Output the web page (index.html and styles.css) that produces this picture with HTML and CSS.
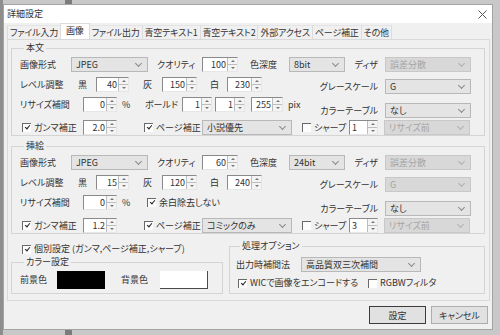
FILE: index.html
```html
<!DOCTYPE html>
<html lang="ja">
<head>
  <meta charset="UTF-8" />
  <title>詳細設定</title>
  <link rel="stylesheet" href="styles.css">
</head>
<body>
  <div class="dialog">
    <div class="titlebar">
      <span class="title">詳細設定</span>
      <svg class="close" width="9" height="9" viewBox="0 0 9 9"><path d="M0.5 0.5L8.5 8.5M8.5 0.5L0.5 8.5" stroke="#555" stroke-width="1"/></svg>
    </div>

    <div class="tabs">
      <span class="tab">ファイル入力</span>
      <span class="tab active">画像</span>
      <span class="tab">ファイル出力</span>
      <span class="tab">青空テキスト1</span>
      <span class="tab">青空テキスト2</span>
      <span class="tab">外部アクセス</span>
      <span class="tab">ページ補正</span>
      <span class="tab">その他</span>
    </div>

    <div class="panel">
      <!-- 本文 -->
      <fieldset class="group">
        <legend>本文</legend>
        <div class="layers">
          <div class="stack left">
            <div class="row">
              <span class="lb w51">画像形式</span>
              <span class="sel w77">JPEG</span>
              <span class="lb ml9 w45">クオリティ</span>
              <span class="spin w36"><span class="val">100</span><span class="updown"></span></span>
              <span class="lb ml12 w39">色深度</span>
              <span class="sel w56">8bit</span>
            </div>
            <div class="row">
              <span class="lb w58">レベル調整</span>
              <span class="lb w18">黒</span>
              <span class="spin w33"><span class="val">40</span><span class="updown"></span></span>
              <span class="lb ml14 w19">灰</span>
              <span class="spin w35"><span class="val">150</span><span class="updown"></span></span>
              <span class="lb ml13 w17">白</span>
              <span class="spin w35"><span class="val">230</span><span class="updown"></span></span>
            </div>
            <div class="row">
              <span class="lb w63">リサイズ補間</span>
              <span class="spin w34"><span class="val">0</span><span class="updown"></span></span>
              <span class="lb ml5 w23">%</span>
              <span class="lb w37">ボールド</span>
              <span class="spin w30"><span class="val">1</span><span class="updown"></span></span>
              <span class="spin ml3 w30"><span class="val">1</span><span class="updown"></span></span>
              <span class="spin ml6 w32"><span class="val">255</span><span class="updown"></span></span>
              <span class="lb ml5">pix</span>
            </div>
            <div class="row last">
              <span class="chk w63"><span class="box on"></span>ガンマ補正</span>
              <span class="spin w34"><span class="val">2.0</span><span class="updown"></span></span>
              <span class="chk ml25 w60"><span class="box on"></span>ページ補正</span>
              <span class="sel w90">小説優先</span>
              <span class="chk ml8 w49"><span class="box"></span>シャープ</span>
              <span class="spin start w29"><span class="val">1</span><span class="updown"></span></span>
              <span class="sel off ml6 w86">リサイズ前</span>
            </div>
          </div>
          <div class="stack right">
            <div class="row">
              <span class="lb">ディザ</span>
              <span class="sel off w86">誤差分散</span>
            </div>
            <div class="row">
              <span class="lb">グレースケール</span>
              <span class="sel w86">G</span>
            </div>
            <div class="row shifted">
              <span class="lb">カラーテーブル</span>
              <span class="sel w86">なし</span>
            </div>
          </div>
        </div>
      </fieldset>

      <!-- 挿絵 -->
      <fieldset class="group next">
        <legend>挿絵</legend>
        <div class="layers">
          <div class="stack left">
            <div class="row">
              <span class="lb w51">画像形式</span>
              <span class="sel w77">JPEG</span>
              <span class="lb ml9 w45">クオリティ</span>
              <span class="spin w36"><span class="val">60</span><span class="updown"></span></span>
              <span class="lb ml12 w39">色深度</span>
              <span class="sel w56">24bit</span>
            </div>
            <div class="row">
              <span class="lb w58">レベル調整</span>
              <span class="lb w18">黒</span>
              <span class="spin w33"><span class="val">15</span><span class="updown"></span></span>
              <span class="lb ml14 w19">灰</span>
              <span class="spin w35"><span class="val">120</span><span class="updown"></span></span>
              <span class="lb ml13 w17">白</span>
              <span class="spin w35"><span class="val">240</span><span class="updown"></span></span>
            </div>
            <div class="row">
              <span class="lb w63">リサイズ補間</span>
              <span class="spin w34"><span class="val">0</span><span class="updown"></span></span>
              <span class="lb ml5 w23">%</span>
              <span class="chk"><span class="box on"></span>余白除去しない</span>
            </div>
            <div class="row last">
              <span class="chk w63"><span class="box on"></span>ガンマ補正</span>
              <span class="spin w34"><span class="val">1.2</span><span class="updown"></span></span>
              <span class="chk ml25 w60"><span class="box on"></span>ページ補正</span>
              <span class="sel w90">コミックのみ</span>
              <span class="chk ml8 w49"><span class="box"></span>シャープ</span>
              <span class="spin start w29"><span class="val">3</span><span class="updown"></span></span>
              <span class="sel off ml6 w86">リサイズ前</span>
            </div>
          </div>
          <div class="stack right">
            <div class="row">
              <span class="lb">ディザ</span>
              <span class="sel off w86">誤差分散</span>
            </div>
            <div class="row">
              <span class="lb">グレースケール</span>
              <span class="sel off w86">G</span>
            </div>
            <div class="row shifted">
              <span class="lb">カラーテーブル</span>
              <span class="sel w86">なし</span>
            </div>
          </div>
        </div>
      </fieldset>

      <div class="bottom">
        <div class="bottom-left">
          <span class="chk solo"><span class="box on"></span>個別設定 (ガンマ,ページ補正,シャープ)</span>
          <fieldset class="group color">
            <legend>カラー設定</legend>
            <div class="row swatches">
              <span class="lb w39">前景色</span>
              <span class="swatch black"></span>
              <span class="lb ml16 w39">背景色</span>
              <span class="swatch white"></span>
            </div>
          </fieldset>
        </div>
        <fieldset class="group proc">
          <legend>処理オプション</legend>
          <div class="row">
            <span class="lb w65">出力時補間法</span>
            <span class="sel w120">高品質双三次補間</span>
          </div>
          <div class="row opts">
            <span class="chk w130"><span class="box on"></span>WICで画像をエンコードする</span>
            <span class="chk"><span class="box"></span>RGBWフィルタ</span>
          </div>
        </fieldset>
      </div>
    </div>

    <div class="buttons">
      <span class="btn default">設定</span>
      <span class="btn">キャンセル</span>
    </div>
  </div>
</body>
</html>
```

FILE: styles.css
```css
* {
  box-sizing: border-box;
}
body {
  margin: 0;
  padding: 4px 0 0 3px;
  width: 500px;
  height: 335px;
  overflow: hidden;
  background: linear-gradient(to right, #8e8e8e 0 3px, #c8c8c8 3px 65px, #7c7c7c 65px 72px, #c8c8c8 72px);
  font-family: "Noto Sans CJK JP", sans-serif;
  font-size: 9px;
  font-feature-settings: "palt";
  color: #333;
}
.dialog {
  width: 490px;
  height: 326px;
  background: #f0f0f0;
  border: 1px solid #a4a4a4;
}
.titlebar {
  height: 18px;
  background: #fff;
  display: flex;
  align-items: center;
  justify-content: space-between;
  padding: 0 5px 0 3px;
}
.title {
  line-height: 10px;
}

/* tabs */
.tabs {
  display: flex;
  align-items: flex-end;
  height: 16px;
  padding-left: 3px;
}
.tab {
  height: 14px;
  line-height: 13px;
  padding: 0 2px;
  letter-spacing: -0.2px;
  border-right: 1px solid #dcdcdc;
  border-top: 1px solid #e4e4e4;
  background: #f0f0f0;
}
.tab:first-child {
  border-left: 1px solid #dcdcdc;
}
.tab.active {
  height: 16px;
  background: #fff;
  border-left: 1px solid #dcdcdc;
  border-top-color: #dcdcdc;
  margin-left: -1px;
  padding: 0 5px;
}
.panel {
  height: 262px;
  margin: 0 2px 0 3px;
  border: 1px solid #d9d9d9;
  padding: 3px 4px 0 3px;
}

/* group boxes */
.group {
  margin: 0;
  min-width: 0;
  border: 1px solid #d4d4d4;
  padding: 4px 13px 0 8px;
}
.group legend {
  line-height: 10px;
  padding: 0 2px;
  margin-left: 4px;
}
.group.next {
  margin-top: 5px;
}
.layers {
  display: grid;
}
.stack {
  grid-area: 1 / 1;
  display: flex;
  flex-direction: column;
}
.stack.left .row + .row {
  margin-top: 5px;
}
.stack.left .row.last {
  margin-top: 8px;
}
.stack.right {
  justify-self: end;
  align-items: flex-end;
}
.stack.right .row + .row {
  margin-top: 7px;
}
.stack.right .row.shifted {
  margin-top: 9px;
}
.stack.right .lb {
  margin-right: 7px;
}
.row {
  display: flex;
  align-items: center;
  height: 15px;
  white-space: nowrap;
}

/* widths */
.w17 { width: 17px; }
.w18 { width: 18px; }
.w19 { width: 19px; }
.w23 { width: 23px; }
.w29 { width: 29px; }
.w30 { width: 30px; }
.w32 { width: 32px; }
.w33 { width: 33px; }
.w34 { width: 34px; }
.w35 { width: 35px; }
.w36 { width: 36px; }
.w37 { width: 37px; }
.w39 { width: 39px; }
.w45 { width: 45px; }
.w49 { width: 49px; }
.w51 { width: 51px; }
.w56 { width: 56px; }
.w58 { width: 58px; }
.w60 { width: 60px; }
.w63 { width: 63px; }
.w65 { width: 65px; }
.w77 { width: 77px; }
.w86 { width: 86px; }
.w90 { width: 90px; }
.w120 { width: 120px; }
.w130 { width: 130px; }
.ml3 { margin-left: 3px; }
.ml5 { margin-left: 5px; }
.ml6 { margin-left: 6px; }
.ml8 { margin-left: 8px; }
.ml9 { margin-left: 9px; }
.ml12 { margin-left: 12px; }
.ml13 { margin-left: 13px; }
.ml14 { margin-left: 14px; }
.ml16 { margin-left: 16px; }
.ml25 { margin-left: 25px; }

.lb {
  flex: none;
  line-height: 10px;
}

/* combo box */
.sel {
  flex: none;
  height: 15px;
  display: flex;
  align-items: center;
  justify-content: space-between;
  padding: 0 6px 0 4px;
  background: #e4e4e4;
  border: 1px solid #b8b8b8;
}
.sel::after {
  content: "";
  width: 4px;
  height: 4px;
  margin-top: -3px;
  border-right: 1px solid #888;
  border-bottom: 1px solid #888;
  transform: rotate(45deg);
}
.sel.off {
  background: #d8d8d8;
  border-color: #c8c8c8;
  color: #a4a4a4;
}
.sel.off::after {
  border-color: #b0b0b0;
}

/* numeric up-down */
.spin {
  flex: none;
  height: 15px;
  display: flex;
  background: #fff;
  border: 1px solid;
  border-color: #8a8a8a #e6e6e6 #e6e6e6 #8a8a8a;
}
.spin .val {
  flex: 1;
  text-align: right;
  padding-right: 1px;
  line-height: 13px;
}
.spin.start .val {
  text-align: left;
  padding-left: 2px;
}
.updown {
  width: 10px;
  display: flex;
  flex-direction: column;
  border-left: 1px solid #bdbdbd;
  background: linear-gradient(#bdbdbd, #bdbdbd) center / 100% 1px no-repeat, #f4f4f4;
  align-items: center;
  justify-content: space-around;
}
.updown::before,
.updown::after {
  content: "";
  border-left: 2px solid transparent;
  border-right: 2px solid transparent;
}
.updown::before {
  border-bottom: 2px solid #777;
}
.updown::after {
  border-top: 2px solid #777;
}

/* check box */
.chk {
  flex: none;
  display: flex;
  align-items: center;
  line-height: 10px;
}
.box {
  width: 9px;
  height: 9px;
  margin: 0 3px 0 2px;
  border-top: 1px solid #6a6a6a;
  border-left: 1px solid #6a6a6a;
  background: #fdfdfd;
  display: flex;
  justify-content: center;
}
.box.on::after {
  content: "";
  width: 4px;
  height: 2px;
  margin-top: 1px;
  border-left: 1.5px solid #222;
  border-bottom: 1.5px solid #222;
  transform: rotate(-50deg);
}

/* bottom area */
.bottom {
  display: flex;
  margin-top: 7px;
}
.bottom-left {
  width: 212px;
  margin-right: 6px;
}
.chk.solo {
  height: 14px;
  margin: 1px 0 0 9px;
}
.group.color {
  margin-top: 1px;
  padding: 4px 8px 4px 8px;
}
.swatches {
  height: 18px;
}
.swatch {
  width: 48px;
  height: 18px;
}
.swatch.black {
  background: #000;
  margin-left: -2px;
}
.swatch.white {
  background: #fff;
  border-right: 1px solid #4a4a4a;
  border-bottom: 1px solid #4a4a4a;
}
.group.proc {
  flex: 1;
  padding: 6px 8px 3px 6px;
}
.row.opts {
  height: 14px;
  margin-top: 4px;
}

/* buttons */
.buttons {
  display: flex;
  justify-content: flex-end;
  gap: 5px;
  margin-top: 5px;
  padding-right: 4px;
}
.btn {
  width: 57px;
  height: 18px;
  display: flex;
  align-items: center;
  justify-content: center;
  background: #e1e1e1;
  border: 1px solid #adadad;
}
.btn.default {
  border: 1px solid #3c3c3c;
}
```
